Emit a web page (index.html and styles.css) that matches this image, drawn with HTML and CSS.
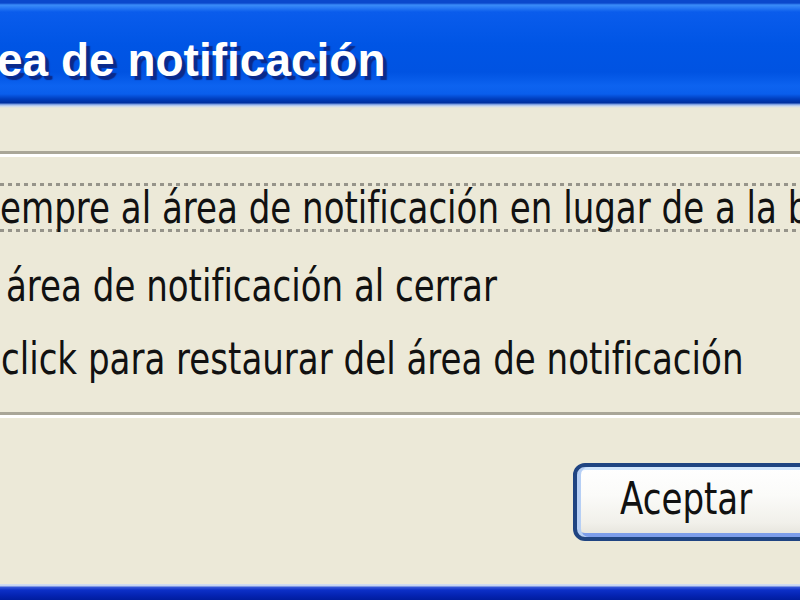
FILE: index.html
```html
<!DOCTYPE html>
<html lang="es">
<head>
<meta charset="utf-8">
<title>Área de notificación</title>
<link rel="stylesheet" href="styles.css">
</head>
<body>
<div class="window">
  <header class="titlebar">
    <h1 class="title">ea de notificación</h1>
  </header>
  <main class="client">
    <div class="sep sep-top"></div>
    <div class="options">
      <div class="option focused"><span class="txt">empre al área de notificación en lugar de a la barra de tareas</span></div>
      <div class="option second"><span class="txt">área de notificación al cerrar</span></div>
      <div class="option third"><span class="txt">click para restaurar del área de notificación</span></div>
    </div>
    <div class="sep sep-bottom"></div>
    <div class="buttons">
      <button class="btn default"><span class="txt">Aceptar</span></button>
    </div>
  </main>
  <footer class="frame-bottom"></footer>
</div>
</body>
</html>
```
FILE: styles.css
```css
html, body {
  margin: 0;
  padding: 0;
}
body {
  width: 800px;
  height: 600px;
  overflow: hidden;
  background: #ECE9D8;
  font-family: "DejaVu Sans", "Liberation Sans", sans-serif;
  color: #111;
}
.window {
  display: flex;
  flex-direction: column;
  height: 600px;
}
.titlebar {
  height: 108px;
  flex: none;
  background: linear-gradient(to bottom,
    #0A48CC 0, #0A48CC 3px, #3A8CF8 5px, #2E80F6 7px, #0A5CEC 12px,
    #0055E5 45px, #0053E2 72px, #0D63F0 86px, #0A5EEC 94px,
    #003DBD 99px, #002E9C 103px, #6A90DC 104px, #C8D8F2 106px, #ECE9D8 108px);
  overflow: hidden;
}
.title {
  margin: 0 0 0 -3px;
  padding-top: 34px;
  font-family: "Liberation Sans", "DejaVu Sans", sans-serif;
  font-weight: bold;
  font-size: 46px;
  line-height: 52px;
  color: #FFFFFF;
  text-shadow: 4px 4px 1px #0B2A8A;
  white-space: nowrap;
}
.client {
  flex: 1;
  display: flex;
  flex-direction: column;
}
.sep {
  height: 0;
  border-top: 3px solid #A9A698;
  border-bottom: 3px solid #FFFFFF;
}
.sep-top {
  margin-top: 43px;
}
.options {
  display: flex;
  flex-direction: column;
  margin-top: 26px;
}
.option {
  height: 49px;
  line-height: 49px;
  font-size: 44px;
  white-space: nowrap;
  overflow: hidden;
}
.txt {
  display: inline-block;
  transform: scaleX(0.774);
  transform-origin: 0 50%;
}
.focused {
  background:
    repeating-linear-gradient(to right, #96948A 0 4px, transparent 4px 8px) left top / 100% 3px no-repeat,
    repeating-linear-gradient(to right, #96948A 0 4px, transparent 4px 8px) left bottom / 100% 3px no-repeat;
}
.second {
  margin-top: 29px;
  padding-left: 6px;
}
.third {
  margin-top: 24px;
  padding-left: 1px;
}
.sep-bottom {
  margin-top: 29px;
}
.buttons {
  display: flex;
  margin-top: 45px;
  padding-left: 573px;
}
.btn {
  flex: none;
  width: 300px;
  height: 78px;
  box-sizing: border-box;
  border: 4px solid #1F4482;
  border-radius: 12px;
  padding: 0 0 6px 43px;
  text-align: left;
  font-family: "DejaVu Sans", "Liberation Sans", sans-serif;
  font-size: 44px;
  line-height: 64px;
  color: #111;
  background: linear-gradient(to bottom, #FFFFFF 0, #FBFBF9 40%, #F1F0EA 80%, #E4E2DA 100%);
  box-shadow:
    inset 4px 0 0 #B6CFF5,
    inset 0 3px 0 #D2E6FD,
    inset 0 -4px 0 #7C9DEA;
}
.frame-bottom {
  flex: none;
  margin-top: auto;
  height: 16px;
  background: linear-gradient(to bottom,
    #D4DEF2 0, #C2D2F0 2px, #3A5AD8 3px, #0C30C8 6px, #0524B4 11px, #001C9E 16px);
}
```
